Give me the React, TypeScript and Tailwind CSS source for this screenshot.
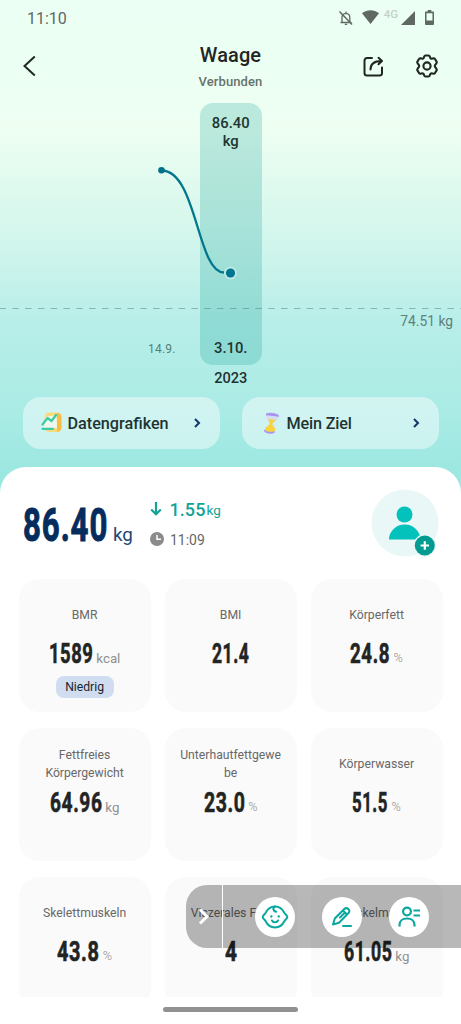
import { clsx } from 'clsx';

interface Metric {
	label: string;
	value: string;
	// drawn width of the condensed figure
	width: number;
	unit?: string;
	badge?: string;
	className?: string;
}

const METRICS: Metric[] = [
	{ label: 'BMR', value: '1589', width: 44, unit: 'kcal', badge: 'Niedrig' },
	{ label: 'BMI', value: '21.4', width: 37 },
	{ label: 'Körperfett', value: '24.8', width: 39.5, unit: '%' },
	{ label: 'Fettfreies Körpergewicht', value: '64.96', width: 52, unit: 'kg' },
	{ label: 'Unterhautfettgewebe', value: '23.0', width: 41, unit: '%' },
	{ label: 'Körperwasser', value: '51.5', width: 35.5, unit: '%', className: 'h-[132px]' },
	{ label: 'Skelettmuskeln', value: '43.8', width: 42, unit: '%' },
	{ label: 'Viszerales Fett', value: '4', width: 12 },
	{ label: 'Muskelmasse', value: '61.05', width: 48, unit: 'kg' },
];

// Condensed figures: digits are squeezed so that the whole value fills the given width
function Figure({ value, width, size, color }: { value: string; width: number; size: number; color: string }) {
	const spacing = size * 0.03;
	const dots = value.split('.').length - 1;
	const natural = (value.length - dots) * size * 0.575 + dots * size * 0.29 + (value.length - 1) * spacing;
	return (
		<svg width={width} height={size} className="shrink-0 overflow-visible">
			<text
				y={size * 0.86}
				transform={`scale(${width / natural} 1)`}
				fill={color}
				stroke={color}
				strokeWidth={size * 0.022}
				fontSize={size}
				fontWeight={700}
				letterSpacing={spacing}
			>
				{value}
			</text>
		</svg>
	);
}

function StatusBar() {
	return (
		<div className="flex h-9 items-center pl-[27px] pr-[26px] text-[#5f6862]">
			<span className="mt-[2px] text-[16px]">11:10</span>
			<div className="ml-auto flex items-center">
				<svg width="16" height="16" viewBox="0 0 16 16" fill="none" stroke="currentColor" strokeWidth="1.3" className="-mt-px mr-px">
					<path d="M4 12.500V7.200C4 4.800 5.600 3.600 8 3.300c2.400.3 3.800 1.900 3.800 3.900v5.300M2.500 12.500h11M8 1.500v2M6.800 14.300h2.400" />
					<path d="M1.500 1.500l12.500 13" strokeWidth="1.5" />
				</svg>
				<svg width="17" height="14" viewBox="0 0 17 14" className="ml-[7px] -mt-[2px]" fill="currentColor">
					<path d="M8.500 14L0 3.300C5 -.8 12-.8 17 3.300z" />
				</svg>
				<span className="ml-[5px] -mt-[7px] text-[11.500px] font-medium leading-none text-[#c2d1c8]">4G</span>
				<svg width="14" height="14" viewBox="0 0 14 14" className="ml-[3px] -mt-px" fill="currentColor">
					<path d="M0 14L14 0v14z" />
				</svg>
				<svg width="9" height="15" viewBox="0 0 10 15" className="ml-[10px] mr-px -mt-px" preserveAspectRatio="none" fill="currentColor">
					<path fillRule="evenodd" d="M3 0h4v1.500h2a1 1 0 0 1 1 1V14a1 1 0 0 1-1 1H1a1 1 0 0 1-1-1V2.500a1 1 0 0 1 1-1h2zM1.700 3.200V10.500h6.600V3.200z" />
				</svg>
			</div>
		</div>
	);
}

function Header() {
	return (
		<header className="grid h-[60px] grid-cols-3 text-[#1f2623]">
			<svg width="14" height="22" viewBox="0 0 14 22" className="ml-[22px] mt-[19px]" fill="none" stroke="currentColor" strokeWidth="2">
				<path d="M12.800 1.500L2.500 11l10.300 9.500" />
			</svg>
			<div className="text-center">
				<h1 className="mt-[6px] text-[20px] font-medium leading-[26px] tracking-[0.1px]">Waage</h1>
				<p className="mt-[5px] text-[13px] font-medium leading-[18px] tracking-[0.1px] text-[#67736d]">Verbunden</p>
			</div>
			<div className="mt-[18px] flex h-6 items-center justify-end gap-[31px] pr-[22px]">
				<svg width="21" height="21" viewBox="0 0 21 21" fill="none" stroke="currentColor" strokeWidth="2" strokeLinecap="round" strokeLinejoin="round">
					<path d="M9 2H4a2.500 2.500 0 0 0-2.500 2.500v12.500A2.500 2.500 0 0 0 4 19.500h12.500A2.500 2.500 0 0 0 19 17v-5.500" />
					<path d="M7.500 13.500C7.500 8.500 11 5 18.500 5M15.500 1.800L19 5l-3.500 3.300" />
				</svg>
				<svg width="24" height="24" viewBox="0 0 24 24" fill="none" stroke="currentColor" strokeWidth="2.100" strokeLinejoin="round">
					<path d="M9.200 2.500Q9.500 1.500 10.500 1.500h3q1 0 1.300 1l.4 1.300q.4.900 1.400.900l1.900-.5q1-.1 1.500.8l1.600 2.600q.5.900-.2 1.700l-1 1.300q-.6.900-.6 1.400t.6 1.400l1 1.300q.7.800.2 1.700L20 19q-.5.900-1.500.8l-1.900-.5q-1 0-1.400.9l-.4 1.300q-.3 1-1.300 1h-3q-1 0-1.300-1l-.4-1.300q-.4-.9-1.400-.9l-1.900.5q-1 .1-1.500-.8l-1.600-2.600q-.5-.9.2-1.700l1-1.300q.6-.9.6-1.400t-.6-1.400l-1-1.300q-.7-.8-.2-1.700L4 5q.5-.9 1.500-.8l1.900.5q1 0 1.400-.9z" />
					<circle cx="12" cy="12" r="3.600" />
				</svg>
			</div>
		</header>
	);
}

function Chart() {
	return (
		<section className="relative h-[301px]">
			<div className="absolute left-[200px] top-[7px] flex h-[262px] w-[61.500px] flex-col items-center justify-between rounded-[13px] bg-[#00988f]/21 pb-[8px] pt-[11px] text-center text-[14.800px] font-medium leading-[18px] text-[#203431]">
				<span>
					86.40
					<br />
					kg
				</span>
				<span>3.10.</span>
			</div>
			<svg width="461" height="301" className="absolute left-0 top-0" fill="none">
				<line x1="0" y1="212.500" x2="461" y2="212.500" stroke="#4b807b" strokeOpacity="0.5" strokeDasharray="6.500 6.300" strokeDashoffset="0.500" />
				<path d="M161.500 74.500C197 74.500 197 176.500 224 176.500" stroke="#02768d" strokeWidth="2.300" />
				<circle cx="161.500" cy="74.300" r="3.300" fill="#02708a" />
				<circle cx="230.500" cy="177" r="6.500" fill="#bde8e6" />
				<circle cx="230.500" cy="177" r="4.600" fill="#02768f" />
			</svg>
			<span className="absolute right-[8px] top-[216px] text-[13.800px] leading-[18px] text-[#5f807c]">74.51 kg</span>
			<span className="absolute left-[148px] top-[245px] text-[12px] leading-4 tracking-[0.2px] text-[#567f79]">14.9.</span>
			<span className="absolute left-[200px] top-[273px] w-[61.500px] text-center text-[14.600px] font-medium leading-[18px] text-[#203431]">2023</span>
		</section>
	);
}

function Chevron() {
	return (
		<svg width="7" height="10" viewBox="0 0 7 10" fill="none" stroke="#12376a" strokeWidth="2" className="ml-auto">
			<path d="M1 1l4 4-4 4" />
		</svg>
	);
}

function Shortcuts() {
	return (
		<div className="flex gap-[22px] px-[22.500px] text-[16.200px] font-medium text-[#1f3432]">
			<button className="flex h-[52px] w-[197px] items-center rounded-[18px] bg-white/45 pl-[18px] pr-[19px]">
				<svg width="21" height="21" viewBox="0 0 21 21" fill="none" className="-mt-px">
					<rect x="3.500" y="0.500" width="17" height="19.500" rx="4.500" fill="#fadb7c" />
					<path d="M16 .8c4 0 4.500 3 4.500 6v8c0 3-2 5-4.500 5z" fill="#f7bd45" />
					<path d="M4.500 5l11-2 .5 13H3z" fill="#eef7f0" />
					<path d="M1.500 12.500l5-6.500 4 3L15 3" stroke="#3ccba3" strokeWidth="2.200" strokeLinejoin="round" strokeLinecap="round" />
					<path d="M1.500 16.800h10.500" stroke="#3ccba3" strokeWidth="2.200" strokeLinecap="round" />
				</svg>
				<span className="ml-[6px] mt-[2px]">Datengrafiken</span>
				<Chevron />
			</button>
			<button className="flex h-[52px] w-[197px] items-center rounded-[18px] bg-white/45 pl-[21px] pr-[19px]">
				<svg width="17" height="23" viewBox="0 0 17 23">
					<path d="M3 3l12 2c0 4-4 4-5 7 2 3 3 5 2 8L2 18c0-4 4-4 5-7-2-2-4-4-4-8z" fill="#d7dcf0" />
					<path d="M5.500 7l7 1c-1 2-3 2.500-3.500 4.500 2 2.500 3.500 3.500 3 6.500-3 2-8 1.500-10-1 0-3 4-4 5-7-.8-1-1.200-2-1.500-4z" fill="#f6d43a" />
					<path d="M3 1.500C7 .2 12 1 15.800 3v2C11 4 7 3.500 3 3.500z" fill="#a895ef" />
					<path d="M1 17.500c3 2.500 7 3 10.500 1.500v2c-4 1.500-9 .5-10.500-2z" fill="#a895ef" />
				</svg>
				<span className="ml-[7px] mt-[2px] tracking-[-0.15px]">Mein Ziel</span>
				<Chevron />
			</button>
		</div>
	);
}

function Summary() {
	return (
		<div className="flex h-[112.500px] items-start pl-[22.500px] pr-[22px]">
			<div className="mt-[34px] flex">
				<Figure value="86.40" width={84.5} size={47} color="#042c5c" />
				<span className="ml-[6px] mt-[22px] text-[18.800px] leading-6 text-[#254674]">kg</span>
			</div>
			<div className="ml-[17px] mt-[31.500px]">
				<div className="flex h-[22px] items-center text-[#12a398]">
					<svg width="12" height="14" viewBox="0 0 12 14" fill="none" stroke="currentColor" strokeWidth="2.200">
						<path d="M6 0v12M1.200 7.500L6 12.200l4.800-4.700" />
					</svg>
					<span className="ml-[7.500px] text-[18px] font-medium tracking-[0.1px]">1.55</span>
					<span className="ml-[1px] mt-[3px] text-[13.500px]">kg</span>
				</div>
				<div className="mt-[9px] flex h-5 items-center text-[14px] text-[#686868]">
					<svg width="14" height="14" viewBox="0 0 14 14" fill="none">
						<circle cx="7" cy="7" r="7" fill="#8b8b8b" />
						<path d="M7 3v4.300h4" stroke="#fff" strokeWidth="1.500" />
					</svg>
					<span className="ml-[6px] mt-[2px]">11:09</span>
				</div>
			</div>
			<svg width="68" height="68" viewBox="0 0 68 68" className="ml-auto mt-[22px]">
				<circle cx="34" cy="34" r="33.500" fill="#e9f7f7" />
				<circle cx="33.500" cy="25.500" r="8" fill="#03c1bb" />
				<path d="M18 50.500a15.700 15 0 0 1 31.400 0z" fill="#03c1bb" />
				<circle cx="53.800" cy="56.500" r="11.200" fill="#e9f7f7" />
				<circle cx="53.800" cy="56.500" r="10" fill="#039a91" />
				<path d="M53.800 52.300v8.400M49.600 56.500h8.400" stroke="#fff" strokeWidth="2.200" />
			</svg>
		</div>
	);
}

function MetricCard({ label, value, width, unit, badge, className }: Metric) {
	return (
		<div className={clsx('flex flex-col items-center rounded-[21px] bg-[#fafafa]', className ?? 'h-[133px]')}>
			<div className="mt-[17px] flex h-[38px] w-[104px] items-center justify-center text-center text-[12.200px] leading-[18.500px] text-[#686868] [word-break:break-word]">
				{label}
			</div>
			<div className="mt-[5px] flex h-7">
				<Figure value={value} width={width} size={28} color="#222424" />
				{unit && (
					<span
						className={clsx(
							'ml-[3.500px] leading-5 text-[#8f8f8f]',
							unit === '%' ? 'mt-[9px] text-[12.500px] font-light' : 'mt-[10px] text-[13.300px]'
						)}
					>
						{unit}
					</span>
				)}
			</div>
			{badge && (
				<span className="mt-[9px] h-[22px] rounded-[8px] bg-[#d0ddf0] px-[9.500px] text-[12.200px] leading-[23px] text-[#20262e]">{badge}</span>
			)}
		</div>
	);
}

function FloatingActions() {
	return (
		<div className="absolute right-0 top-[885px] flex h-[63px] w-[275px] items-center rounded-l-[21px] bg-black/28">
			<svg width="36" height="63" viewBox="0 0 36 63" fill="none" stroke="#fff" className="shrink-0">
				<path d="M14 24.500l7 7-7 7" strokeWidth="3" />
			</svg>
			<div className="h-full w-px bg-white" />
			<div className="ml-[32px] flex gap-[27px]">
				<div className="grid size-10 place-items-center rounded-full bg-white">
					<svg width="28" height="24" viewBox="0 0 28 24" fill="none" stroke="#0aa79f" strokeWidth="2" strokeLinecap="round" strokeLinejoin="round">
						<path d="M4.500 8C6.500 4 10 1.500 14 1.500S21.500 4 23.500 8c1 1.500 2.800 2.500 2.800 4s-1.800 2.500-2.800 4c-2 4-5.500 6.500-9.500 6.500S6.500 20 4.500 16c-1-1.500-2.800-2.500-2.800-4S3.500 9.500 4.500 8z" />
						<path d="M14 1.500c-2.500 1-2.200 4.500 1.200 5.300M11 15.500c1 2.400 5 2.400 6 0" />
						<path d="M10.300 11.500h.1M17.700 11.500h.1" strokeWidth="2.300" />
					</svg>
				</div>
				<div className="grid size-10 place-items-center rounded-full bg-white">
					<svg width="22" height="22" viewBox="0 0 22 22" fill="none" stroke="#0aa79f" strokeWidth="2" strokeLinecap="round" strokeLinejoin="round">
						<path d="M2 18.500l1.800-6L13.300 3q2-1.800 4 0t.2 4L8 16.700z" />
						<path d="M13 5.500l2.500 2.500M14 6.500l-5 5M12 20h8" />
					</svg>
				</div>
				<div className="grid size-10 place-items-center rounded-full bg-white">
					<svg width="24" height="22" viewBox="0 0 24 22" fill="none" stroke="#0aa79f" strokeWidth="2.200">
						<circle cx="10" cy="5.500" r="3.900" />
						<path d="M2.500 20.500v-1.500c0-4 3-6.500 7.500-6.500s7.500 2.500 7.500 6.500v1.500M16.500 4.500H23M16.500 9.500H23" />
					</svg>
				</div>
			</div>
		</div>
	);
}

export default function App() {
	return (
		<div className="relative h-[1024px] w-[461px] overflow-hidden bg-[linear-gradient(#ebfff4_0px,#edfff3_100px,#eefff2_130px,#e1faef_180px,#cff5ec_250px,#b8eee9_320px,#aeece6_390px,#9be7e1_480px)] font-['Roboto',sans-serif]">
			<StatusBar />
			<Header />
			<Chart />
			<Shortcuts />
			<main className="mt-[17.500px] h-[558px] rounded-t-[26px] bg-white">
				<Summary />
				<div className="h-[418px] overflow-hidden">
					<div className="grid grid-cols-[repeat(3,132px)] gap-x-[14px] gap-y-[16px] px-[18.600px]">
						{METRICS.map((metric) => (
							<MetricCard key={metric.label} {...metric} />
						))}
					</div>
				</div>
				<div className="mx-auto mt-[9.500px] h-[5px] w-[135px] rounded-full bg-[#919191]" />
			</main>
			<FloatingActions />
		</div>
	);
}
